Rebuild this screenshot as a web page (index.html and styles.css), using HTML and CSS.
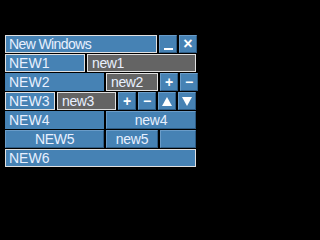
FILE: index.html
```html
<!DOCTYPE html>
<html>
<head>
<meta charset="utf-8">
<link rel="stylesheet" href="styles.css">
</head>
<body>
<div class="win">
  <div class="row">
    <div class="label bordered title">New Windows</div>
    <div class="btn icon w18 minus-bar"><span class="bar"></span></div>
    <div class="btn icon w18 x">×</div>
  </div>
  <div class="row">
    <div class="label bordered w79">NEW1</div>
    <div class="field grow">new1</div>
  </div>
  <div class="row">
    <div class="label w100">NEW2</div>
    <div class="field w52">new2</div>
    <div class="btn icon w18">+</div>
    <div class="btn icon w18">−</div>
  </div>
  <div class="row">
    <div class="label bordered w50">NEW3</div>
    <div class="field grow">new3</div>
    <div class="btn icon w18">+</div>
    <div class="btn icon w18">−</div>
    <div class="btn icon w18"><svg class="tri" width="10" height="9" viewBox="0 0 10 9"><polygon points="5,0 10,9 0,9" fill="#fff"/></svg></div>
    <div class="btn icon w18"><svg class="tri" width="10" height="9" viewBox="0 0 10 9"><polygon points="0,0 10,0 5,9" fill="#fff"/></svg></div>
  </div>
  <div class="row">
    <div class="label w100">NEW4</div>
    <div class="btn center grow">new4</div>
  </div>
  <div class="row">
    <div class="btn center w100">NEW5</div>
    <div class="btn center w52">new5</div>
    <div class="btn grow"></div>
  </div>
  <div class="row">
    <div class="label bordered grow">NEW6</div>
  </div>
</div>
</body>
</html>
```
FILE: styles.css
```css
html, body {
  margin: 0;
  padding: 0;
  background: #000;
  width: 200px;
  height: 200px;
  overflow: hidden;
}
.win {
  margin: 35px 0 0 5px;
  width: 191px;
  display: flex;
  flex-direction: column;
  gap: 1px;
  font-family: "Liberation Sans", Arial, sans-serif;
  font-size: 14px;
  color: #e8f0ff;
}
.row {
  display: flex;
  gap: 2px;
  height: 18px;
}
.row > div {
  box-sizing: border-box;
  height: 18px;
  line-height: 16px;
  white-space: nowrap;
  overflow: hidden;
  flex: none;
}
.label {
  background: #4682b4;
  padding-left: 3px;
  border: 1px solid #4682b4;
}
.label.bordered {
  border-color: #e0e0e0;
}
.title { letter-spacing: -0.6px; }
.field {
  background: #646464;
  border: 1px solid #e0e0e0;
  padding-left: 4px;
  letter-spacing: -0.4px;
}
.btn {
  background: #4682b4;
  border-top: 1px solid #6a9cc8;
  border-left: 1px solid #6a9cc8;
  border-right: 1px solid #2e5c84;
  border-bottom: 1px solid #2e5c84;
}
.center { text-align: center; letter-spacing: -0.3px; }
.icon {
  display: flex;
  align-items: center;
  justify-content: center;
  font-weight: bold;
  color: #fff;
}
.icon.x { font-size: 16px; }
.minus-bar { align-items: flex-end; padding-bottom: 2px; }
.bar {
  display: block;
  width: 9px;
  height: 2px;
  background: #fff;
}
.tri { display: block; }
.title { width: 152px; }
.w18 { width: 18px; }
.w50 { width: 50px; }
.w52 { width: 52px; }
.w79 { width: 80px; }
.w100 { width: 99px; }
.row > .grow { flex: 1 1 auto; }
```
